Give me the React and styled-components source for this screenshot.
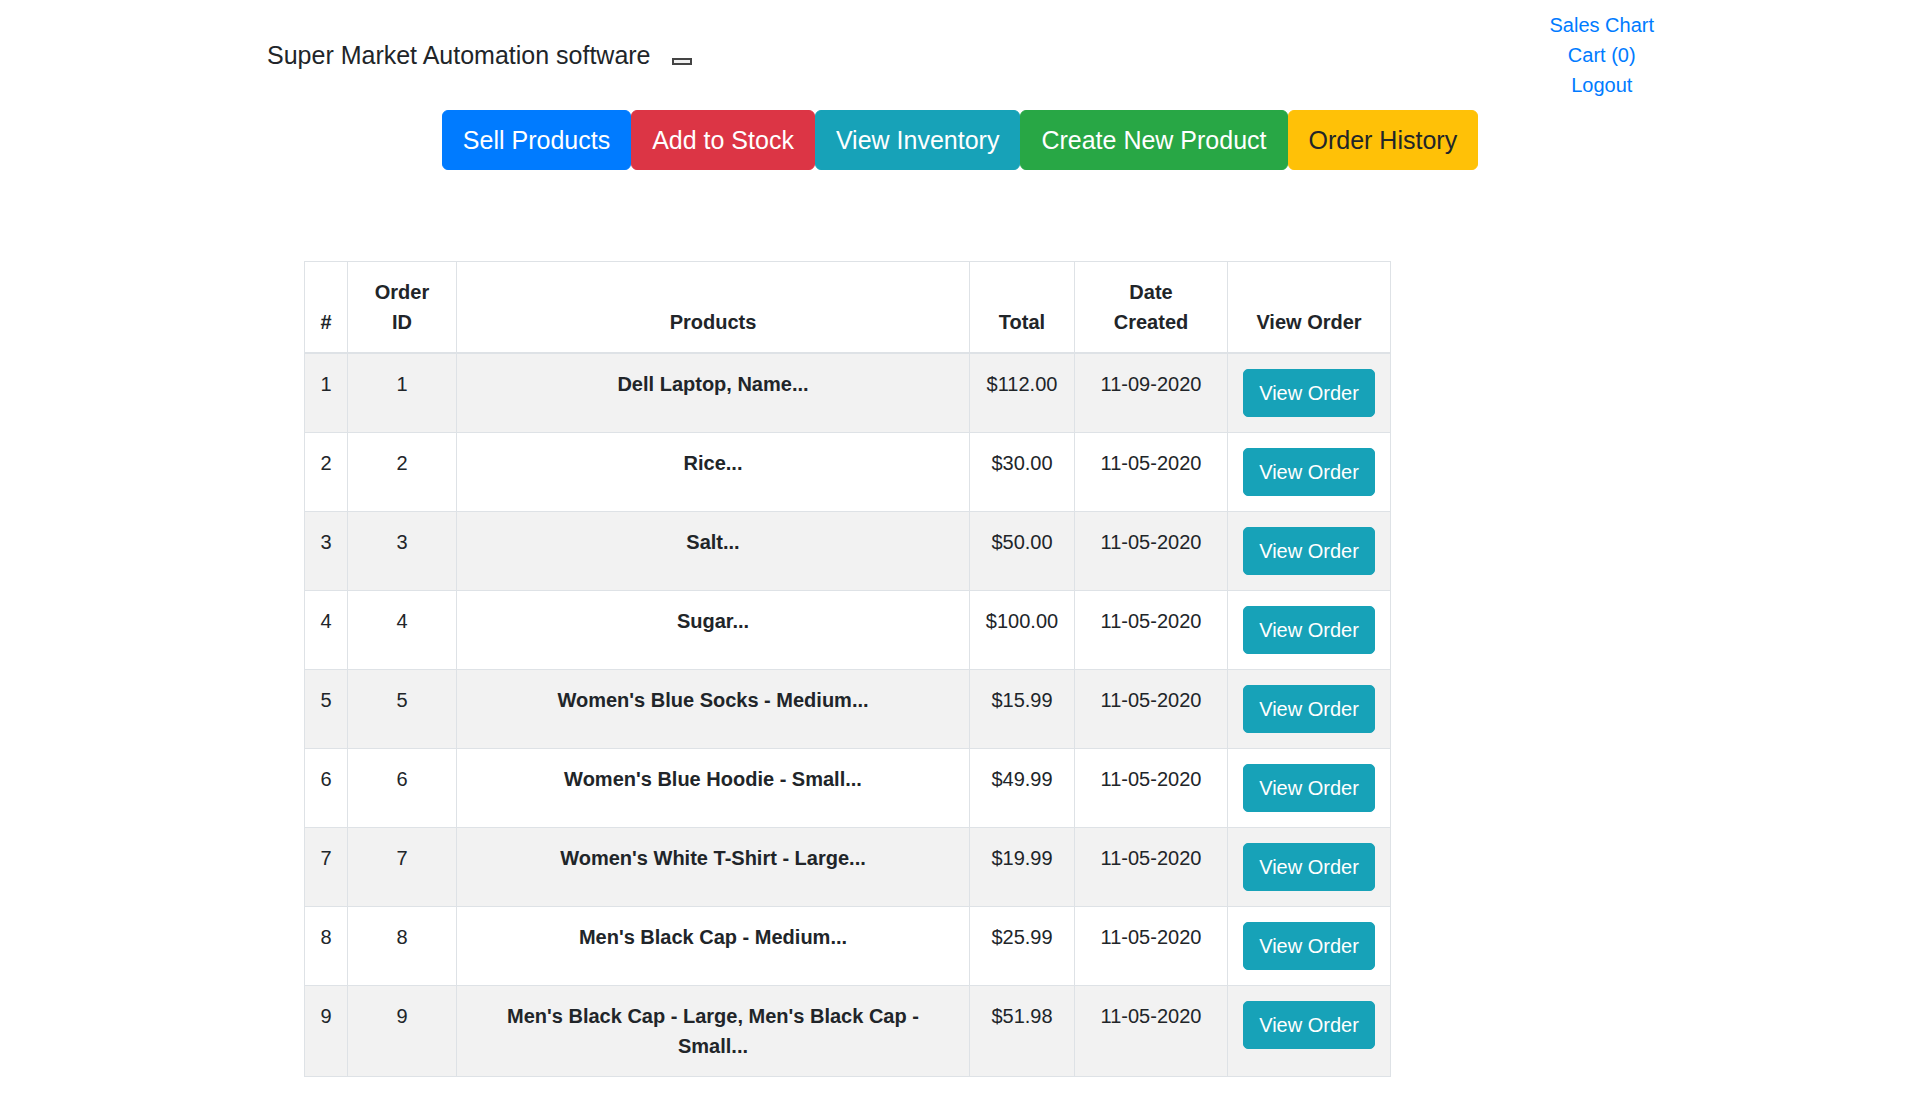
import React from "react";
import styled, { createGlobalStyle } from "styled-components";

const GlobalStyle = createGlobalStyle`
  body {
    margin: 0;
    background: #fff;
    color: #212529;
    font-family: "Liberation Sans", Arial, sans-serif;
    font-size: 20px;
    line-height: 30px;
  }
  * { box-sizing: border-box; }
`;

const orders = [
  { id: 1, products: "Dell Laptop, Name...", total: "$112.00", date: "11-09-2020" },
  { id: 2, products: "Rice...", total: "$30.00", date: "11-05-2020" },
  { id: 3, products: "Salt...", total: "$50.00", date: "11-05-2020" },
  { id: 4, products: "Sugar...", total: "$100.00", date: "11-05-2020" },
  { id: 5, products: "Women's Blue Socks - Medium...", total: "$15.99", date: "11-05-2020" },
  { id: 6, products: "Women's Blue Hoodie - Small...", total: "$49.99", date: "11-05-2020" },
  { id: 7, products: "Women's White T-Shirt - Large...", total: "$19.99", date: "11-05-2020" },
  { id: 8, products: "Men's Black Cap - Medium...", total: "$25.99", date: "11-05-2020" },
  {
    id: 9,
    products: "Men's Black Cap - Large, Men's Black Cap - Small...",
    total: "$51.98",
    date: "11-05-2020",
  },
];

const menu = [
  { label: "Sell Products", bg: "#007bff", fg: "#fff" },
  { label: "Add to Stock", bg: "#dc3545", fg: "#fff" },
  { label: "View Inventory", bg: "#17a2b8", fg: "#fff" },
  { label: "Create New Product", bg: "#28a745", fg: "#fff" },
  { label: "Order History", bg: "#ffc107", fg: "#212529" },
];

const columns = [
  { label: "#", width: 43 },
  { label: "Order ID", width: 109 },
  { label: "Products", width: 513 },
  { label: "Total", width: 105 },
  { label: "Date Created", width: 153 },
  { label: "View Order", width: 163 },
];

const App = () => {
  return (
    <Page>
      <GlobalStyle />
      <Header>
        <Brand>
          Super Market Automation software
          <Toggler />
        </Brand>
        <UserLinks>
          <a href="#chart">Sales Chart</a>
          <a href="#cart">Cart (0)</a>
          <a href="#logout">Logout</a>
        </UserLinks>
      </Header>

      <Menu>
        {menu.map((m) => (
          <MenuButton key={m.label} $bg={m.bg} $fg={m.fg}>
            {m.label}
          </MenuButton>
        ))}
      </Menu>

      <TableWrap>
        <Table>
          <colgroup>
            {columns.map((c) => (
              <col key={c.label} style={{ width: c.width }} />
            ))}
          </colgroup>
          <thead>
            <tr>
              {columns.map((c) => (
                <Th key={c.label}>{c.label}</Th>
              ))}
            </tr>
          </thead>
          <tbody>
            {orders.map((o, i) => (
              <Row key={o.id} $striped={i % 2 === 0}>
                <Td>{o.id}</Td>
                <Td>{o.id}</Td>
                <Td $bold>{o.products}</Td>
                <Td>{o.total}</Td>
                <Td>{o.date}</Td>
                <Td>
                  <ViewButton>View Order</ViewButton>
                </Td>
              </Row>
            ))}
          </tbody>
        </Table>
      </TableWrap>
    </Page>
  );
};

const Page = styled.div`
  width: 1920px;
  min-height: 1097px;
`;

const Header = styled.header`
  display: flex;
  justify-content: space-between;
  align-items: flex-start;
  padding: 10px 266px 0 267px;
`;

const Brand = styled.div`
  display: flex;
  align-items: center;
  margin-top: 27px;
  font-size: 25px;
  line-height: 37px;
  color: #212529;
`;

const Toggler = styled.span`
  display: inline-block;
  width: 20px;
  height: 7px;
  margin: 12px 0 0 21px;
  border: 2px solid #444;
  background: #f0f0f0;
`;

const UserLinks = styled.nav`
  display: flex;
  flex-direction: column;
  align-items: center;
  line-height: 30px;

  a {
    color: #007bff;
    text-decoration: none;
  }
`;

const Menu = styled.div`
  display: flex;
  justify-content: center;
  margin-top: 10px;
`;

const MenuButton = styled.button`
  font-family: inherit;
  font-size: 25px;
  line-height: 38px;
  padding: 10px 20px;
  border: 1px solid ${(p) => p.$bg};
  border-radius: 6px;
  background: ${(p) => p.$bg};
  color: ${(p) => p.$fg};
  cursor: pointer;
`;

const TableWrap = styled.div`
  margin: 91px 0 0 304px;
`;

const Table = styled.table`
  width: 1086px;
  table-layout: fixed;
  border-collapse: collapse;
  border: 1px solid #dee2e6;
`;

const Th = styled.th`
  padding: 15px;
  border: 1px solid #dee2e6;
  border-bottom: 2px solid #dee2e6;
  vertical-align: bottom;
  text-align: center;
  font-weight: 700;
  line-height: 30px;
`;

const Row = styled.tr`
  background: ${(p) => (p.$striped ? "#f2f2f2" : "#fff")};
`;

const Td = styled.td`
  padding: 15px;
  border: 1px solid #dee2e6;
  vertical-align: top;
  text-align: center;
  line-height: 30px;
  font-weight: ${(p) => (p.$bold ? 700 : 400)};
`;

const ViewButton = styled.button`
  font-family: inherit;
  font-size: 20px;
  line-height: 30px;
  padding: 8px 15px;
  border: 1px solid #17a2b8;
  border-radius: 5px;
  background: #17a2b8;
  color: #fff;
  cursor: pointer;
`;

export default App;
